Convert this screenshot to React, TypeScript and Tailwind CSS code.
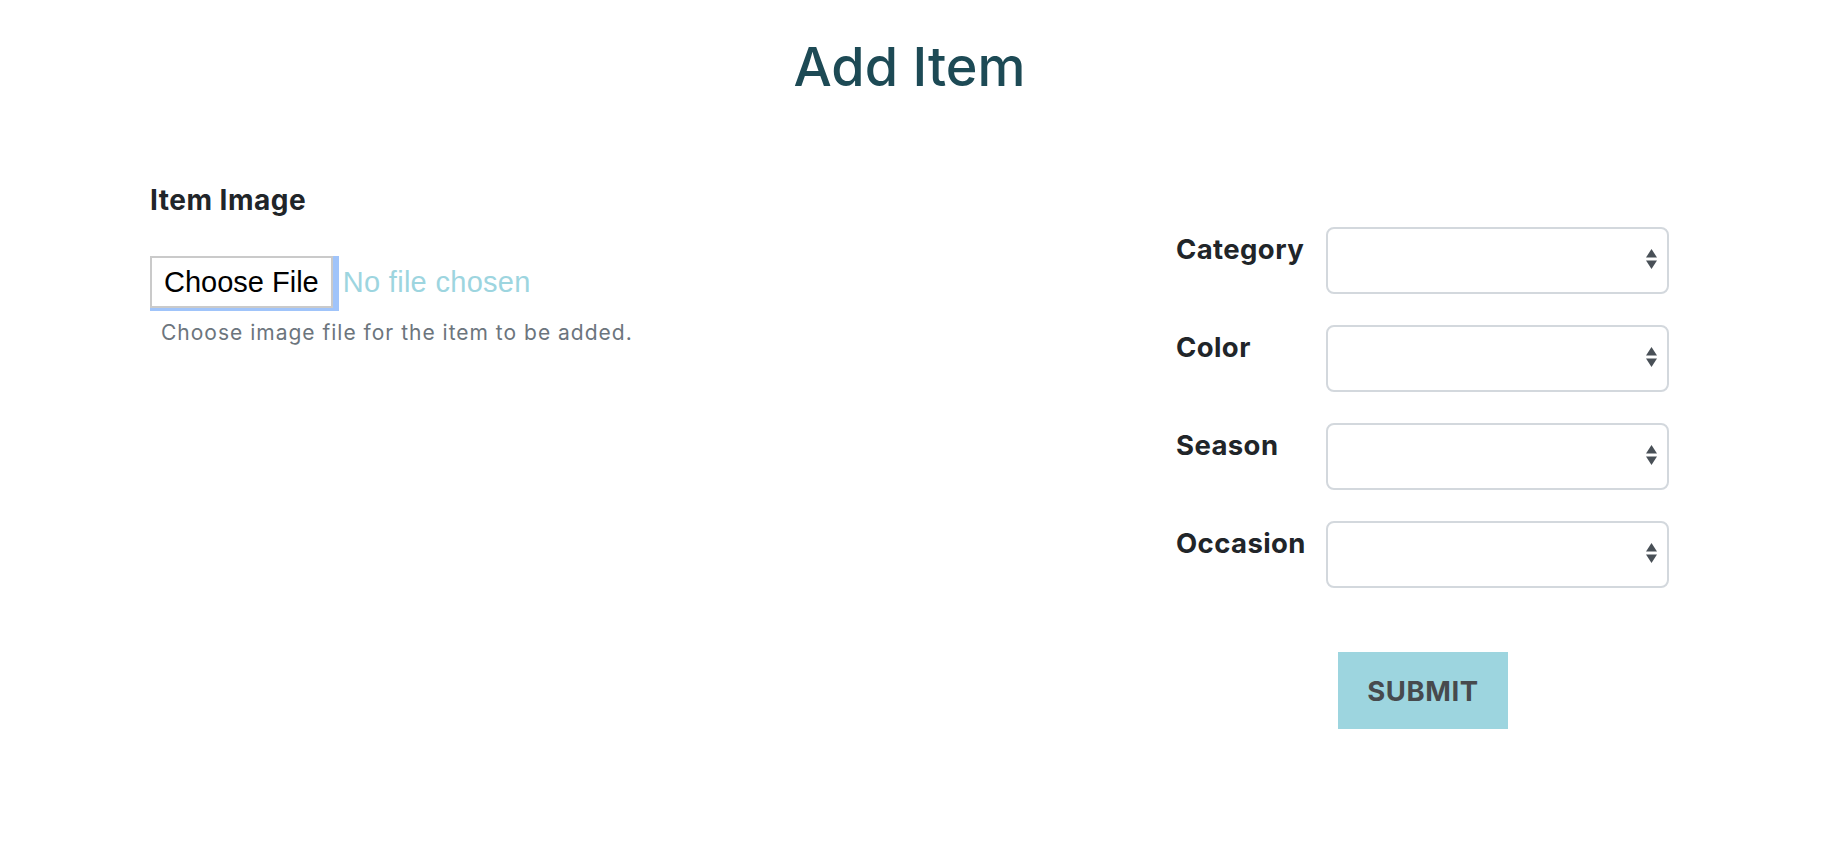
import React from 'react';

const fields = ['Category', 'Color', 'Season', 'Occasion'];

function SelectArrows() {
  return (
    <svg width="11" height="20" viewBox="0 0 11 20" className="mb-[4px]">
      <polygon points="5.5,0 11,8.5 0,8.5" fill="#495057" />
      <polygon points="0,11.5 11,11.5 5.5,20" fill="#495057" />
    </svg>
  );
}

export default function App() {
  return (
    <div className="min-h-screen bg-white font-['Inter','Liberation_Sans',sans-serif]">
      <div className="w-[1819px] px-[150px]">
        {/* Titulo */}
        <h1 className="pt-[34px] text-center text-[54px] leading-[66px] font-medium text-[#1d4a55]">
          Add Item
        </h1>

        <div className="mt-[80px] flex">
          {/* Imagen */}
          <div className="w-[1026px]">
            <label className="block text-[28px] leading-[41px] font-bold tracking-[0.5px] text-[#212529]">Item Image</label>
            <div className="mt-[35px] flex items-start">
              <span className="inline-flex bg-[#a0c4fa] pr-[6px] pb-[3px]">
                <button className="h-[52px] border-2 border-[#cacaca] bg-white px-[12px] font-['Liberation_Sans',Arial,sans-serif] text-[29px] leading-[32px] text-black">
                  Choose File
                </button>
              </span>
              <span className="mt-[10px] ml-[4px] font-['Liberation_Sans',Arial,sans-serif] text-[29px] leading-[32px] tracking-[0.3px] text-[#9dd5df]">
                No file chosen
              </span>
            </div>
            <p className="mt-[7px] ml-[11px] text-[21px] leading-[30px] tracking-[1px] text-[#6c757d]">
              Choose image file for the item to be added.
            </p>
          </div>

          {/* Campos */}
          <div className="w-[493px] pt-[47px]">
            <div className="flex flex-col gap-[31px]">
              {fields.map((f) => (
                <div key={f} className="flex">
                  <label className="w-[150px] pt-[2px] text-[27.5px] leading-[41px] font-bold tracking-[0.4px] text-[#212529]">{f}</label>
                  <div className="flex h-[67px] w-[343px] items-center justify-end rounded-[8px] border-2 border-[#d3d8dd] bg-white pr-[10px]">
                    <SelectArrows />
                  </div>
                </div>
              ))}
            </div>
            <button className="mt-[64px] ml-[162px] flex h-[77px] w-[170px] items-center justify-center bg-[#9dd5df] pt-[3px] text-[27.5px] font-bold tracking-[0.6px] text-[#474a4d]">
              SUBMIT
            </button>
          </div>
        </div>
      </div>
    </div>
  );
}
